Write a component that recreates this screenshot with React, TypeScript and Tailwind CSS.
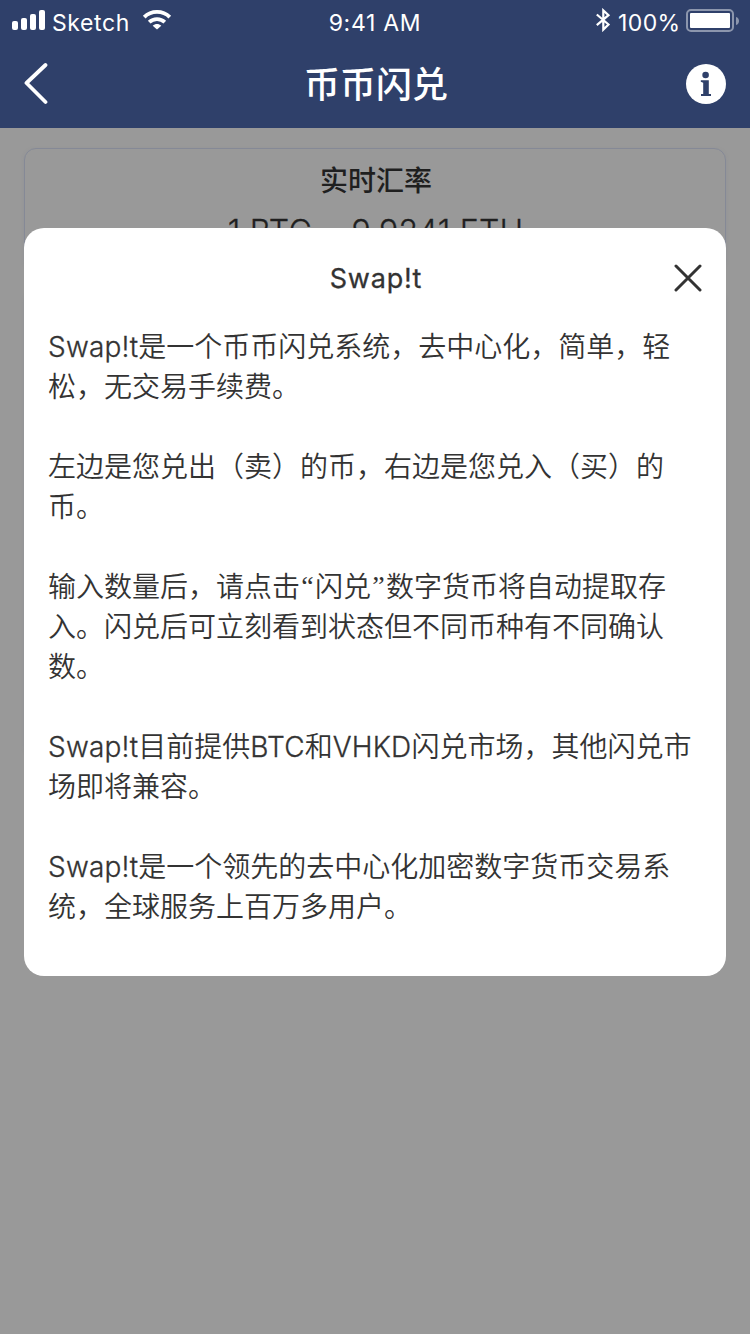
import React from 'react';

const paragraphs: string[][] = [
  ['Swap!t是一个币币闪兑系统，去中心化，简单，轻', '松，无交易手续费。'],
  ['左边是您兑出（卖）的币，右边是您兑入（买）的', '币。'],
  ['输入数量后，请点击“闪兑”数字货币将自动提取存', '入。闪兑后可立刻看到状态但不同币种有不同确认', '数。'],
  ['Swap!t目前提供BTC和VHKD闪兑市场，其他闪兑市', '场即将兼容。'],
  ['Swap!t是一个领先的去中心化加密数字货币交易系', '统，全球服务上百万多用户。'],
];

function Line({ text }: { text: string }) {
  return (
    <span className="block h-10 whitespace-nowrap">
      {text.split(/([“”]|[A-Za-z!]+)/).map((part, i) => {
        if (part === '“' || part === '”') {
          return (
            <span key={i} className="inline-block h-10 w-[15px] text-center align-top font-['Liberation_Serif',serif] leading-[38px]">
              {part}
            </span>
          );
        }
        return /^[A-Za-z!]+$/.test(part) ? (
          <span key={i} className="font-light tracking-[0.2px] [-webkit-text-stroke:0.3px_#333333]">{part}</span>
        ) : (
          part
        );
      })}
    </span>
  );
}

function StatusBar() {
  return (
    <div className="grid h-10 grid-cols-3 items-center text-[23px] leading-10">
      <div className="flex items-center pl-3">
        <svg width="34" height="20" viewBox="0 0 34 20" fill="currentColor" className="block">
          <rect x="0" y="11" width="6" height="9" rx="2" />
          <rect x="9" y="8" width="6" height="12" rx="2" />
          <rect x="18" y="4" width="6" height="16" rx="2" />
          <rect x="27" y="0" width="6" height="20" rx="2" />
        </svg>
        <span className="-mt-[5px] ml-[6px] h-10 w-[78px] pt-[5px] tracking-[0.6px]">Sketch</span>
        <svg width="30" height="20" viewBox="0 0 30 20" className="ml-[12px] block" fill="none" stroke="currentColor" strokeWidth="3.8">
          <path d="M2.2 7.1C9.2.2 20.8.2 27.8 7.1" />
          <path d="M7.2 12.1C11.5 8 18.5 8 22.8 12.1" />
          <path d="M15 19.5 10.7 15.7C13.2 13.5 16.8 13.5 19.3 15.7Z" fill="currentColor" stroke="none" />
        </svg>
      </div>
      <div className="h-10 pt-[3px] text-center tracking-[0.7px]">9:41 AM</div>
      <div className="flex items-center justify-end pr-[10px]">
        <svg width="16" height="24" viewBox="0 0 16 24" fill="none" stroke="currentColor" strokeWidth="2.2" className="block">
          <path d="M.8 6.5 12.5 16.5 7.3 21.6V2.4L12.5 7.2.8 17.2" />
        </svg>
        <span className="-mt-[5px] ml-[6px] h-10 w-[62px] pt-[5px] tracking-[0.4px]">100%</span>
        <svg width="54" height="24" viewBox="0 0 54 24" className="ml-[6px] mt-[2px] block">
          <rect x="1" y="1" width="46" height="21" rx="4" fill="none" stroke="white" strokeOpacity=".45" strokeWidth="2" />
          <rect x="4" y="4" width="40" height="15" rx="1" fill="white" />
          <path d="M50 8c4 1 4 7 0 8Z" fill="white" fillOpacity=".45" />
        </svg>
      </div>
    </div>
  );
}

function NavBar() {
  return (
    <div className="flex h-[88px] items-center justify-between pl-6 pr-6">
      <svg width="40" height="44" viewBox="0 0 40 44" fill="none" stroke="white" strokeWidth="3.8" strokeLinecap="round" strokeLinejoin="round" className="block">
        <path d="M21.5 3 2.5 21 21.5 40" />
      </svg>
      <h1 className="pl-[2px] pt-[1px] text-[36px] font-medium leading-[40px]">币币闪兑</h1>
      <svg width="40" height="40" viewBox="0 0 40 40" className="block">
        <circle cx="20" cy="20" r="20" fill="white" />
        <g fill="#2f406a">
          <circle cx="19.6" cy="11" r="3.3" />
          <path d="M14.8 16.3H22.8V30H25V32H15V30H17.2V18.7L14.8 17.8Z" />
        </g>
      </svg>
    </div>
  );
}

export default function App() {
  return (
    <div className="relative flex h-[1334px] w-[750px] flex-col overflow-hidden bg-[#999999] font-['Inter','Noto_Sans_CJK_SC',sans-serif]">
      <header className="h-32 shrink-0 bg-[#2f406a] text-white">
        <StatusBar />
        <NavBar />
      </header>

      <main className="flex flex-col gap-5 px-6 pt-5 text-[#1f1f1f]">
        <section className="h-[122px] rounded-[12px] border border-[#858996] pt-3 text-center shadow-[0_1px_3px_#85899680]">
          <h2 className="pl-[2px] text-[28px] font-medium leading-10">实时汇率</h2>
          <p className="mt-[8px] pl-[1px] text-[32px] font-light leading-[46px] tracking-[0.2px] [-webkit-text-stroke:0.3px_#1f1f1f]">1 BTC = 9.9241 ETH</p>
        </section>
        <section className="h-[466px] rounded-[12px] border border-[#858996] shadow-[0_1px_3px_#85899680]" />
      </main>

      <div className="absolute left-6 top-[228px] h-[748px] w-[702px] rounded-[20px] bg-white px-6 text-[#333333]">
        <div className="grid h-[99px] grid-cols-[28px_1fr_28px] items-center">
          <span />
          <h2 className="pl-[2px] pt-[2px] text-center text-[27px] font-normal leading-10 tracking-[0.8px] [-webkit-text-stroke:0.3px_#333333]">Swap!t</h2>
          <svg width="28" height="28" viewBox="0 0 28 28" fill="none" stroke="currentColor" strokeWidth="3" strokeLinecap="round" className="block">
            <path d="M2 2 26 26M26 2 2 26" />
          </svg>
        </div>
        <div className="flex flex-col gap-10 text-[28px] font-[350] leading-10">
          {paragraphs.map((lines) => (
            <p key={lines[0]}>
              {lines.map((line) => (
                <Line key={line} text={line} />
              ))}
            </p>
          ))}
        </div>
      </div>
    </div>
  );
}
